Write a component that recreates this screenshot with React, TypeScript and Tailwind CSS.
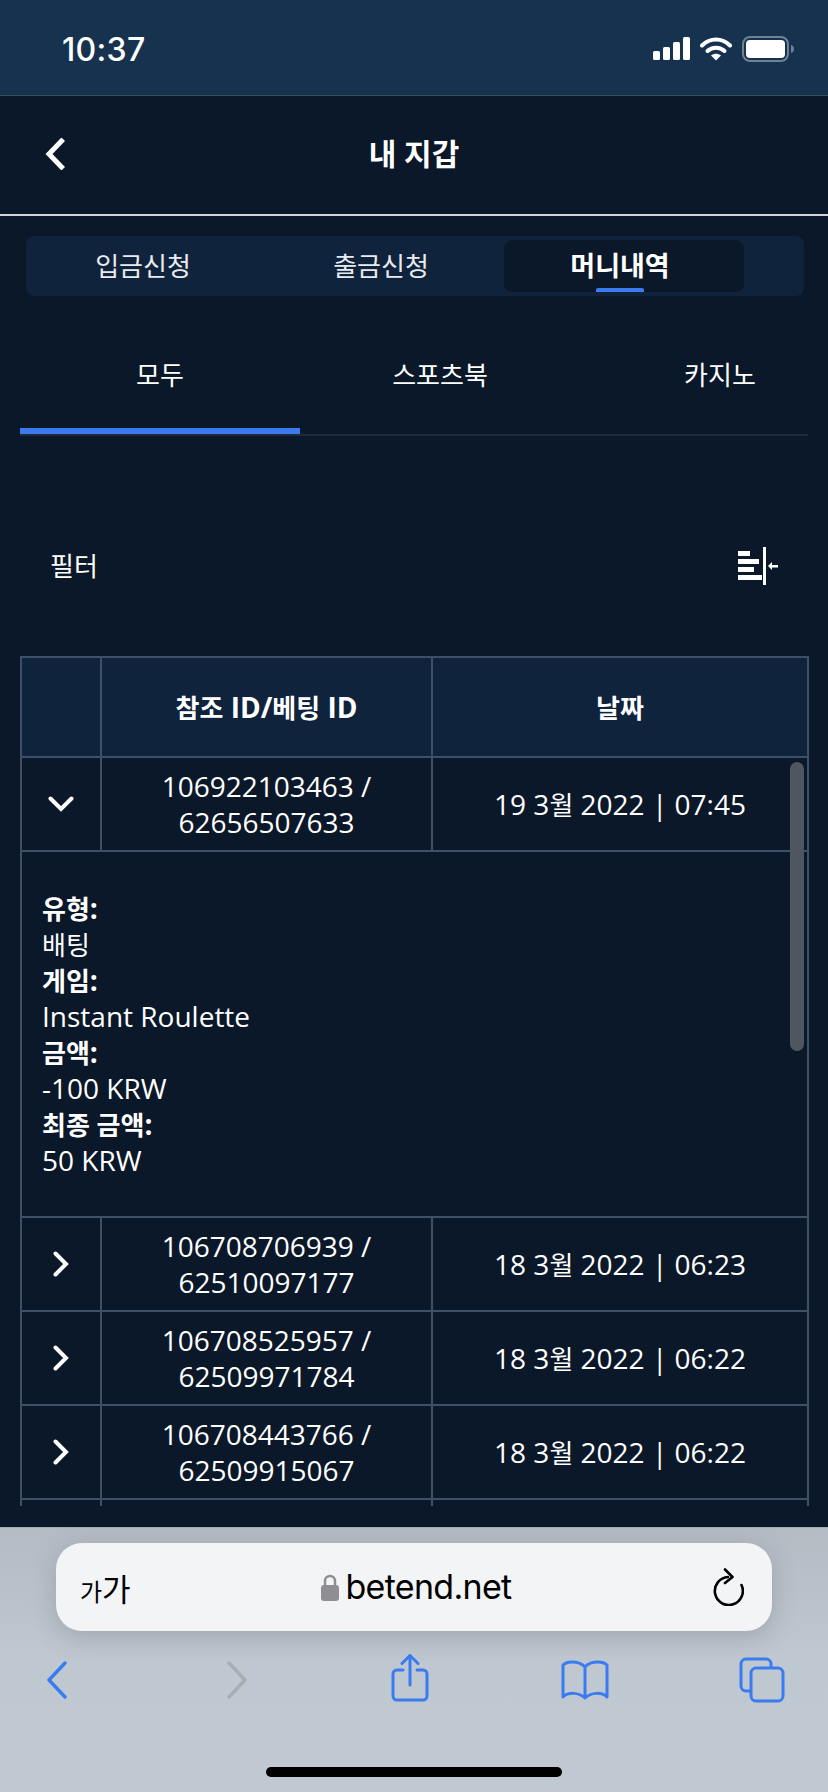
import React from "react";

function K({ children }: { children: React.ReactNode }) {
  return <span className="text-[26px] leading-none">{children}</span>;
}

const rows = [
  ["106708706939 /", "62510097177", "18 ", " 2022 | 06:23"],
  ["106708525957 /", "62509971784", "18 ", " 2022 | 06:22"],
  ["106708443766 /", "62509915067", "18 ", " 2022 | 06:22"],
];

const details = [
  ["유형", "배팅", true],
  ["게임", "Instant Roulette", false],
  ["금액", "-100 KRW", false],
  ["최종 금액", "50 KRW", false],
] as const;

const cell = "border-2 border-[#3e5068] text-center align-middle p-0";

function Chevron({ open }: { open?: boolean }) {
  return open ? (
    <svg width="26" height="16" viewBox="0 0 26 16" className="mx-auto" fill="none" stroke="#fff" strokeWidth="4" strokeLinecap="round" strokeLinejoin="miter">
      <path d="M2.5 2.5 L13 13 L23.5 2.5" />
    </svg>
  ) : (
    <svg width="16" height="26" viewBox="0 0 16 26" className="mx-auto" fill="none" stroke="#fff" strokeWidth="4" strokeLinecap="round" strokeLinejoin="miter">
      <path d="M2.5 2.5 L13 13 L2.5 23.5" />
    </svg>
  );
}

export default function App() {
  return (
    <div className="w-[828px] h-[1792px] overflow-hidden flex flex-col bg-[#0a1829] text-white font-['Open_Sans','Noto_Sans_CJK_KR',sans-serif]">
      {/* status bar */}
      <div className="h-[96px] shrink-0 bg-[#17324f] border-b border-[#3b4c60] flex items-center pl-[62px] pr-[33px] pt-[2px]">
        <span className="text-[32px] font-medium leading-none font-['Inter',sans-serif] mt-[2px] tracking-[0.3px]">10:37</span>
        <div className="ml-auto flex items-center">
          <svg width="37" height="23" viewBox="0 0 37 23" fill="#fff">
            <rect x="0" y="14" width="7" height="9" rx="1.5" />
            <rect x="10" y="10" width="7" height="13" rx="1.5" />
            <rect x="20" y="5" width="7" height="18" rx="1.5" />
            <rect x="30" y="0" width="7" height="23" rx="1.5" />
          </svg>
          <svg width="32" height="24" viewBox="0 0 32 24" className="ml-[10px]" fill="none">
            <path d="M2 8.5 C10 0.5 22 0.5 30 8.5" stroke="#fff" strokeWidth="4" strokeLinecap="round" />
            <path d="M7.5 14 C12 9.5 20 9.5 24.5 14" stroke="#fff" strokeWidth="4" strokeLinecap="round" />
            <path d="M16 23.5 L11 18.5 C14 16 18 16 21 18.5 Z" fill="#fff" />
          </svg>
          <svg width="53" height="26" viewBox="0 0 53 26" className="ml-[10px]" fill="none">
            <rect x="1" y="1" width="45" height="24" rx="7" stroke="#6f8195" strokeWidth="2" />
            <rect x="4" y="4" width="39" height="18" rx="4" fill="#fff" />
            <path d="M49 9 C51.5 10 52 11.5 52 13 C52 14.5 51.5 16 49 17 Z" fill="#6f8195" />
          </svg>
        </div>
      </div>

      {/* header */}
      <div className="h-[120px] shrink-0 border-b-2 border-[#d2d4d6] flex items-center pl-[45px] pb-[3px]">
        <svg width="20" height="32" viewBox="0 0 20 32" fill="none" stroke="#fff" strokeWidth="5" strokeLinecap="square">
          <path d="M16.5 3 L4 16 L16.5 29" />
        </svg>
        <div className="flex-1 text-center text-[30px] font-bold leading-none -ml-[65px]">내 지갑</div>
      </div>

      {/* top tabs */}
      <div className="mt-[20px] ml-[26px] mr-[24px] h-[60px] shrink-0 rounded-[8px] bg-[#10233d] flex pt-[4px] pb-[4px] text-[26px]">
        <div className="w-[234px] h-[52px] flex items-center justify-center text-[#e9ebee]">입금신청</div>
        <div className="w-[238px] ml-[2px] h-[52px] flex items-center justify-center text-[#e9ebee]">출금신청</div>
        <div className="w-[240px] ml-[4px] h-[52px] rounded-[8px] bg-[#0a1829] flex items-center justify-center pr-[8px] text-[27px] font-bold relative">
          머니내역
          <div className="absolute bottom-0 left-[92px] w-[48px] h-[4px] rounded-t-[2px] bg-[#3a7cf0]" />
        </div>
      </div>

      {/* second tabs */}
      <div className="mx-[20px] mt-[40px] h-[100px] shrink-0 overflow-hidden flex border-b-2 border-[#1f2b3a] text-[26px]">
        <div className="w-[280px] shrink-0 border-b-[6px] border-[#3a7cf0] flex items-center justify-center pb-[14px]">모두</div>
        <div className="w-[280px] shrink-0 flex items-center justify-center pb-[20px]">스포츠북</div>
        <div className="w-[280px] shrink-0 flex items-center justify-center pb-[20px]">카지노</div>
      </div>

      {/* filter */}
      <div className="mt-[110px] h-[40px] shrink-0 flex items-center pl-[50px] pr-[50px]">
        <span className="text-[26px] leading-none">필터</span>
        <svg width="40" height="38" viewBox="0 0 40 38" className="ml-auto" fill="#fff">
          <rect x="0" y="4" width="12" height="5" />
          <rect x="0" y="12" width="21" height="5" />
          <rect x="0" y="20" width="16" height="5" />
          <rect x="0" y="28" width="24" height="5" />
          <rect x="25" y="0" width="3" height="38" />
          <path d="M30 19 L34 15 V18 H40 V20.5 H34 V23 Z" />
        </svg>
      </div>

      {/* table */}
      <div className="mt-[70px] ml-[20px] mr-[19px] h-[850px] shrink-0 overflow-hidden relative">
        <table className="w-[787px] table-fixed border-collapse text-[28px] leading-[36px]">
          <colgroup>
            <col className="w-[80px]" />
            <col className="w-[331px]" />
            <col className="w-[376px]" />
          </colgroup>
          <thead>
            <tr className="h-[100px] bg-[#10233d]">
              <th className={cell} />
              <th className={`${cell} font-bold`}><K>참조</K> ID/<K>베팅</K> ID</th>
              <th className={`${cell} font-bold`}><K>날짜</K></th>
            </tr>
          </thead>
          <tbody>
            <tr className="h-[94px]">
              <td className={cell}><Chevron open /></td>
              <td className={cell}>106922103463 /<br />62656507633</td>
              <td className={cell}>19 3<K>월</K> 2022 | 07:45</td>
            </tr>
            <tr className="h-[366px]">
              <td colSpan={3} className="border-2 border-[#3e5068] pl-[20px] text-left align-middle">
                {details.map(([k, v, kr]) => (
                  <React.Fragment key={k}>
                    <div className="font-bold"><K>{k}</K>:</div>
                    <div>{kr ? <K>{v}</K> : v}</div>
                  </React.Fragment>
                ))}
              </td>
            </tr>
            {rows.map((r) => (
              <tr key={r[0]} className="h-[94px]">
                <td className={cell}><Chevron /></td>
                <td className={cell}>{r[0]}<br />{r[1]}</td>
                <td className={cell}>{r[2]}3<K>월</K>{r[3]}</td>
              </tr>
            ))}
            <tr className="h-[94px]">
              <td className={cell} />
              <td className={cell} />
              <td className={cell} />
            </tr>
          </tbody>
        </table>
        <div className="absolute left-[770px] top-[106px] w-[14px] h-[289px] rounded-full bg-[#50565f]" />
      </div>

      {/* browser chrome */}
      <div className="mt-[21px] flex-1 border-t border-[#a2abb5] bg-gradient-to-b from-[#b4bbc3] to-[#c0c8d1] via-[#bfc7d0] flex flex-col text-black">
        <div className="mt-[15px] mx-[56px] h-[88px] shrink-0 rounded-[26px] bg-[#f2f4f6] shadow-[0_6px_24px_rgba(90,100,110,0.3)] flex items-center pl-[24px] pr-[28px]">
          <span className="w-[60px] font-['Noto_Sans_CJK_KR',sans-serif] text-[31px] leading-none"><span className="text-[24px]">가</span>가</span>
          <div className="flex-1 flex items-center justify-center mr-[20px]">
            <svg width="18" height="27" viewBox="0 0 18 27" fill="#8e8e93">
              <rect x="0" y="11" width="18" height="16" rx="3" />
              <path d="M4 12 V7 A5 5 0 0 1 14 7 V12" fill="none" stroke="#8e8e93" strokeWidth="2.5" />
            </svg>
            <span className="ml-[7px] text-[34px] tracking-[-0.7px] leading-none font-['Inter',sans-serif]">betend.net</span>
          </div>
          <svg width="32" height="38" viewBox="0 0 32 38" fill="none" stroke="#000" strokeWidth="2.6" strokeLinecap="round" strokeLinejoin="round">
            <path d="M29.5 17 A14 14 0 1 1 16 9" />
            <path d="M13 1.5 L20.5 9 L13 15" />
          </svg>
        </div>
        <div className="mt-[23px] pl-[47px] flex items-start h-[48px] shrink-0">
          <svg width="20" height="38" viewBox="0 0 20 38" className="mt-[7px]" fill="none" stroke="#3a7cf0" strokeWidth="3.4" strokeLinecap="round" strokeLinejoin="round">
            <path d="M18 2 L2 19 L18 36" />
          </svg>
          <svg width="20" height="38" viewBox="0 0 20 38" className="ml-[160px] mt-[7px]" fill="none" stroke="#a9adb2" strokeWidth="3.4" strokeLinecap="round" strokeLinejoin="round">
            <path d="M2 2 L18 19 L2 36" />
          </svg>
          <svg width="38" height="48" viewBox="0 0 38 48" className="ml-[144px]" fill="none" stroke="#3a7cf0" strokeWidth="3" strokeLinecap="round" strokeLinejoin="round">
            <path d="M12 16 H6 A4 4 0 0 0 2 20 V42 A4 4 0 0 0 6 46 H32 A4 4 0 0 0 36 42 V20 A4 4 0 0 0 32 16 H26" />
            <path d="M19 2 V31" />
            <path d="M11 9.5 L19 1.5 L27 9.5" />
          </svg>
          <svg width="48" height="40" viewBox="0 0 48 40" className="ml-[132px] mt-[6px]" fill="none" stroke="#3a7cf0" strokeWidth="3" strokeLinecap="round" strokeLinejoin="round">
            <path d="M24 7 C21 3.5 16 2 11 2 C7 2 4 3 2 5 V37 C7 32 18 32 24 38 C30 32 41 32 46 37 V5 C44 3 41 2 37 2 C32 2 27 3.5 24 7 V38" />
          </svg>
          <svg width="46" height="46" viewBox="0 0 46 46" className="ml-[130px] mt-[3px]" fill="none" stroke="#3a7cf0" strokeWidth="3" strokeLinejoin="round">
            <path d="M12 34 H7 A5 5 0 0 1 2 29 V7 A5 5 0 0 1 7 2 H27 A5 5 0 0 1 32 7 V11" />
            <rect x="12" y="11" width="32" height="33" rx="5" />
          </svg>
        </div>
        <div className="mt-[65px] mx-auto w-[296px] h-[10px] rounded-full bg-black" />
      </div>
    </div>
  );
}
